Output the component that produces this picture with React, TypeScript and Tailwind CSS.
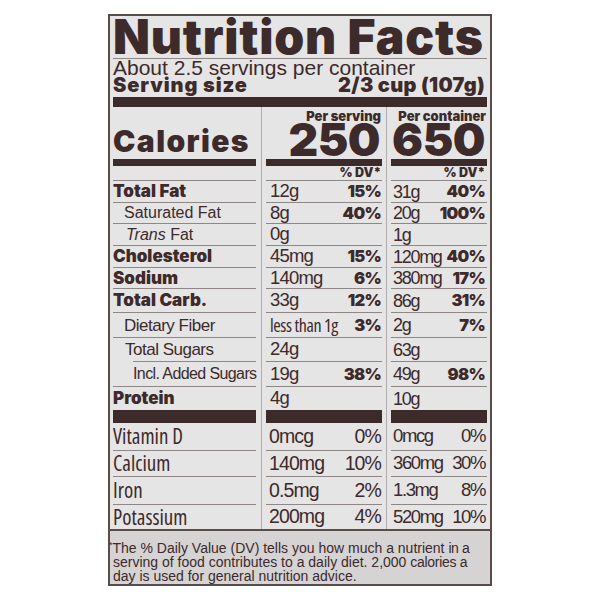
import type { ReactNode } from "react";

const heavy = "font-['Inter',sans-serif] font-black";
const arial = "font-['Liberation_Sans',Arial,sans-serif]";
const narrow = "font-['Open_Sans',sans-serif] font-stretch-condensed";
const rule = "bg-[#8f8686]";

type Row = {
  h: string;
  label: ReactNode;
  labelCls: string;
  a: string;
  ad?: string;
  b: string;
  bd?: string;
  aCls?: string;
  line?: "full" | "indent" | "none";
};

const nutrients: Row[] = [
  { h: "h-[22px]", label: "Total Fat", labelCls: `${heavy} text-[17px]`, a: "12g", ad: "15%", b: "31g", bd: "40%" },
  { h: "h-[21px]", label: "Saturated Fat", labelCls: `${arial} text-[16px] pl-[11px]`, a: "8g", ad: "40%", b: "20g", bd: "100%" },
  {
    h: "h-[22px]",
    label: (
      <>
        <i>Trans</i> Fat
      </>
    ),
    labelCls: `${arial} text-[16px] pl-[13px]`,
    a: "0g",
    b: "1g",
  },
  { h: "h-[22px]", label: "Cholesterol", labelCls: `${heavy} text-[17px]`, a: "45mg", ad: "15%", b: "120mg", bd: "40%" },
  { h: "h-[21px]", label: "Sodium", labelCls: `${heavy} text-[17px]`, a: "140mg", ad: "6%", b: "380mg", bd: "17%" },
  { h: "h-[24px]", label: "Total Carb.", labelCls: `${heavy} text-[17px]`, a: "33g", ad: "12%", b: "86g", bd: "31%" },
  {
    h: "h-[25px]",
    label: "Dietary Fiber",
    labelCls: `${arial} text-[17px] tracking-[-0.5px] pl-[11px]`,
    a: "less than 1g",
    aCls: `${narrow} text-[18px] tracking-[-0.4px]`,
    ad: "3%",
    b: "2g",
    bd: "7%",
  },
  { h: "h-[24px]", label: "Total Sugars", labelCls: `${arial} text-[17px] tracking-[-0.5px] pl-[12px]`, a: "24g", b: "63g", line: "indent" },
  { h: "h-[25px]", label: "Incl. Added Sugars", labelCls: `${arial} text-[16px] tracking-[-0.6px] pl-[20px]`, a: "19g", ad: "38%", b: "49g", bd: "98%" },
  { h: "h-[23px]", label: "Protein", labelCls: `${heavy} text-[17px]`, a: "4g", b: "10g", line: "none" },
];

const vitamins = [
  { h: "h-[28px]", label: "Vitamin D", a: "0mcg", ad: "0%", b: "0mcg", bd: "0%" },
  { h: "h-[26px]", label: "Calcium", a: "140mg", ad: "10%", b: "360mg", bd: "30%" },
  { h: "h-[28px]", label: "Iron", a: "0.5mg", ad: "2%", b: "1.3mg", bd: "8%" },
  { h: "h-[24px]", label: "Potassium", a: "200mg", ad: "4%", b: "520mg", bd: "10%", last: true },
];

const columnStyle = {
  a: {
    wrap: "w-[116px] flex flex-col",
    pad: "pl-[4px] pr-[1px]",
    value: "text-[18.5px] tracking-[-0.8px]",
    vit: "text-[19.5px] tracking-[-0.9px] pl-[3px] pr-[1px]",
  },
  b: {
    wrap: "flex-1 flex flex-col",
    pad: "pl-[2px] pr-[2px]",
    value: "text-[18px] tracking-[-1.3px]",
    vit: "text-[18.5px] tracking-[-1.4px] pl-[2px] pr-[2px]",
  },
};

function Cell({ h, children, line = "full", className = "" }: { h: string; children?: ReactNode; line?: string; className?: string }) {
  return (
    <div className={`${h} flex flex-col`}>
      <div className={`flex-1 flex items-center whitespace-nowrap ${className}`}>{children}</div>
      {line !== "none" && <div className={`h-px ${rule} ${line === "indent" ? "ml-[20px]" : ""}`} />}
    </div>
  );
}

function Separator({ w }: { w: string }) {
  return (
    <div className={`${w} flex justify-center`}>
      <div className="w-px bg-[#b3adad]" />
    </div>
  );
}

function AmountColumn({ title, big, which }: { title: string; big: string; which: "a" | "b" }) {
  const s = columnStyle[which];
  return (
    <div className={s.wrap}>
      <div className="h-[52px] flex flex-col items-end pt-[3px]">
        <div className={`${heavy} text-[13px] leading-[12px] pr-[1px]`}>{title}</div>
        <div className={`${heavy} text-[46px] leading-[35px] tracking-[-0.5px] pr-[2px]`}>{big}</div>
      </div>
      <div className="h-[7px] bg-[#3d2a2b]" />
      <Cell h="h-[15px]" className={`justify-end ${s.pad}`}>
        <span className={`${heavy} text-[12.5px] leading-none`}>% DV*</span>
      </Cell>
      {nutrients.map((r) => {
        const v = which === "a" ? r.a : r.b;
        const d = which === "a" ? r.ad : r.bd;
        const vCls = which === "a" && r.aCls ? r.aCls : `${arial} ${s.value}`;
        return (
          <Cell key={r.h + v + String(r.label)} h={r.h} line={r.line === "none" ? "none" : "full"} className={`justify-between ${s.pad}`}>
            <span className={`${vCls} leading-none`}>{v}</span>
            {d && <span className={`${heavy} text-[16.5px] tracking-[-0.7px] leading-none`}>{d}</span>}
          </Cell>
        );
      })}
      <div className="h-[13px] bg-[#3d2a2b]" />
      {vitamins.map((r) => (
        <Cell key={r.label} h={r.h} line={r.last ? "none" : "full"} className={`justify-between ${arial} leading-none ${s.vit}`}>
          <span>{which === "a" ? r.a : r.b}</span>
          <span>{which === "a" ? r.ad : r.bd}</span>
        </Cell>
      ))}
    </div>
  );
}

function LabelColumn() {
  return (
    <div className="w-[143px] flex flex-col">
      <div className="h-[52px] flex flex-col justify-end pb-[3px]">
        <div className={`${heavy} text-[30px] leading-[30px] tracking-[1.4px]`}>Calories</div>
      </div>
      <div className="h-[7px] bg-[#3d2a2b]" />
      <Cell h="h-[15px]" />
      {nutrients.map((r) => (
        <Cell key={r.h + String(r.a)} h={r.h} line={r.line} className={`${r.labelCls} leading-none`}>
          <span>{r.label}</span>
        </Cell>
      ))}
      <div className="h-[13px] bg-[#3d2a2b]" />
      {vitamins.map((r) => (
        <Cell key={r.label} h={r.h} line={r.last ? "none" : "full"} className={`${narrow} text-[21px] leading-none`}>
          <span>{r.label}</span>
        </Cell>
      ))}
    </div>
  );
}

export default function App() {
  return (
    <div className="w-[600px] h-[600px] bg-white pt-[14px] flex justify-center">
      <div className="w-[384px] h-[572px] border-2 border-[#5b4c4c] bg-[#e5e5e5] text-[#3d2a2b] flex flex-col">
        <div className="px-[3px] flex flex-col">
          <h1 className={`${heavy} mt-[1px] h-[41px] text-[48px] leading-[40px] tracking-[0.8px]`}>Nutrition Facts</h1>
          <div className={`h-px ${rule}`} />
          <div className={`${arial} h-[18px] text-[21px] leading-[18px]`}>About 2.5 servings per container</div>
          <div className={`${heavy} h-[17px] text-[20px] leading-[17px] flex justify-between pr-[2px]`}>
            <span className="tracking-[0.9px]">Serving size</span>
            <span className="tracking-[0.3px]">2/3 cup (107g)</span>
          </div>
          <div className="mt-[3px] h-[10px] bg-[#3d2a2b]" />
          <div className="flex">
            <LabelColumn />
            <Separator w="w-[10px]" />
            <AmountColumn title="Per serving" big="250" which="a" />
            <Separator w="w-[9px]" />
            <AmountColumn title="Per container" big="650" which="b" />
          </div>
        </div>
        <div className={`flex-1 border-t-2 border-[#5b4c4c] bg-[#d5d3d3] pt-[10px] pl-[3px] ${arial} text-[14px] leading-[14px] whitespace-nowrap`}>
          <div>
            <span className="-ml-[4px] align-top text-[9px] leading-none">*</span>The % Daily Value (DV) tells you how much a nutrient <span className="tracking-[-0.4px]">in a</span>
          </div>
          <div>
            serving of food contributes to a daily diet. 2,000 <span className="tracking-[-0.3px]">calories a</span>
          </div>
          <div>day is used for general nutrition advice.</div>
        </div>
      </div>
    </div>
  );
}
